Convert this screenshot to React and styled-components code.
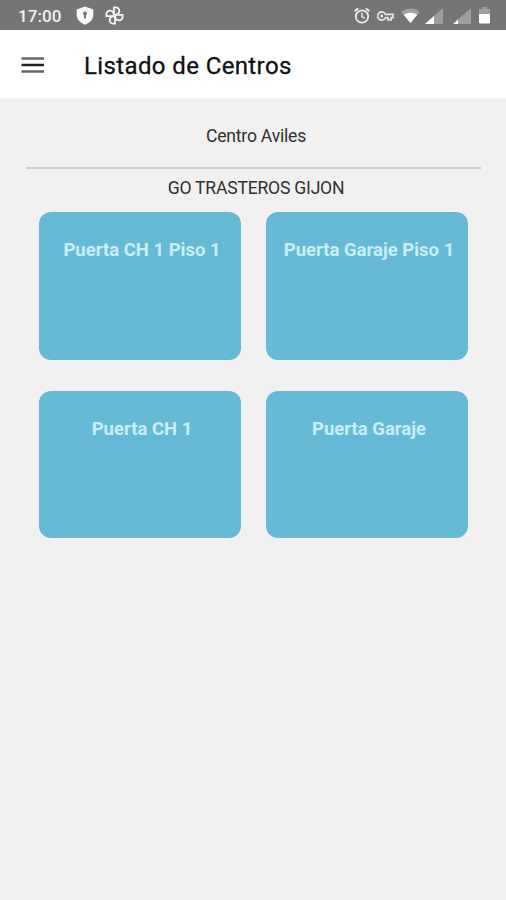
import styled, { createGlobalStyle } from "styled-components";

const GlobalStyle = createGlobalStyle`
  * {
    box-sizing: border-box;
  }

  body {
    margin: 0;
    background: #f1f1f1;
    font-family: Roboto, "Liberation Sans", sans-serif;
  }
`;

const Screen = styled.div`
  width: 506px;
  height: 900px;
  overflow: hidden;
  background: #f1f1f1;
`;

const StatusBar = styled.div`
  height: 30px;
  display: flex;
  align-items: center;
  padding: 1px 16px 0 18px;
  background: #757575;
  color: #f0f0f0;

  & svg {
    display: block;
    flex: none;
  }
`;

const Clock = styled.span`
  width: 58px;
  font-size: 17px;
  font-weight: 500;
  letter-spacing: 0.1px;
`;

const StatusGroup = styled.div`
  display: flex;
  align-items: center;
  gap: ${({ $gap }) => $gap}px;
`;

const StatusRight = styled(StatusGroup)`
  margin-left: auto;
`;

const SignalGroup = styled(StatusGroup)`
  margin: 0 1px 0 -2px;
`;

const Header = styled.header`
  height: 69px;
  display: flex;
  align-items: center;
  padding: 2px 21px 0;
  background: #ffffff;
  border-bottom: 1px solid #f7f7f7;
`;

const MenuButton = styled.button`
  width: 23px;
  margin-right: 40px;
  padding: 0;
  border: 0;
  background: none;
  cursor: pointer;

  & svg {
    display: block;
  }
`;

const Title = styled.h1`
  margin: 2px 0 0;
  font-size: 24px;
  font-weight: 400;
  line-height: 28px;
  letter-spacing: 0.38px;
  color: #111111;
  -webkit-text-stroke: 0.3px #111111;
`;

const Content = styled.main`
  padding: 0 25px 0 26px;
`;

const CenterName = styled.div`
  height: ${({ $height }) => $height}px;
  padding-top: ${({ $top }) => $top}px;
  padding-left: 5px;
  font-size: 17.6px;
  line-height: 24px;
  letter-spacing: -0.23px;
  text-align: center;
  color: #303030;
`;

const Divider = styled.hr`
  height: 2px;
  margin: 0;
  border: 0;
  background: #cfcfcf;
`;

const DoorGrid = styled.div`
  display: grid;
  grid-template-columns: 202px 202px;
  column-gap: 25px;
  row-gap: 31px;
  padding-left: 13px;
`;

const DoorCard = styled.button`
  height: 147.5px;
  display: flex;
  justify-content: center;
  align-items: flex-start;
  padding: 26px 0 0 4px;
  border: 0;
  border-radius: 12px;
  background: #66bad6;
  color: #c9eefa;
  font-family: inherit;
  font-size: 18.5px;
  font-weight: 700;
  line-height: 24px;
  white-space: nowrap;
  cursor: pointer;
`;

const ShieldIcon = () => (
  <svg width="18" height="19" viewBox="0 0 18 19">
    <path
      d="M9 .5 17.3 3.4V9c0 4.500-3.500 8-8.300 9.700C4.200 17 .7 13.500.7 9V3.400z"
      fill="#fafafa"
    />
    <circle cx="9" cy="7.500" r="2" fill="#757575" />
    <path d="M8.200 8h1.600l.3 4.500H7.900z" fill="#757575" />
  </svg>
);

const FanIcon = () => (
  <svg width="19" height="19" viewBox="0 0 18 18">
    <g fill="none" stroke="#f5f5f5" strokeWidth="1.700">
      {[0, 90, 180, 270].map((angle) => (
        <path
          key={angle}
          d="M8.500 8.500V1.300C12 .8 13.800 2.600 13.600 4.900 13.400 7.300 11.500 8.500 8.500 8.500z"
          transform={`rotate(${angle} 9 9)`}
        />
      ))}
    </g>
  </svg>
);

const AlarmIcon = () => (
  <svg width="16" height="17" viewBox="0 0 16 17">
    <g fill="none" stroke="#eeeeee" strokeWidth="1.800">
      <circle cx="8" cy="9.500" r="6.200" />
      <path d="M8 5.800V9.700l2.700 1.700" strokeWidth="1.400" />
      <path d="M.7 4.200 4.200 1.200M15.300 4.200 11.800 1.200" />
    </g>
  </svg>
);

const KeyIcon = () => (
  <svg width="17" height="10" viewBox="0 0 17 10">
    <path
      d="M8.500 3.400A4.100 4.100 0 1 0 8.500 6.600H11V9h3.200V6.600H16V3.400z"
      fill="none"
      stroke="#e8e8e8"
      strokeWidth="1.600"
    />
    <circle cx="4.800" cy="5" r="1.400" fill="#e8e8e8" />
  </svg>
);

const WifiIcon = () => (
  <svg width="19" height="15" viewBox="0 0 20 16">
    <path d="M0 4.200C6 -.6 14 -.6 20 4.200L10 16z" fill="#a2a2a2" />
    <path d="M2.800 7.300C7.300 4.200 12.700 4.200 17.200 7.300L10 16z" fill="#ffffff" />
  </svg>
);

const SignalIcon = ({ level }) => (
  <svg width="18" height="16" viewBox="0 0 18 16">
    <path d="M18 0v16H0z" fill="#9e9e9e" />
    <path d={`M0 16 ${level} ${16 - (level * 16) / 18}V16z`} fill="#ffffff" />
  </svg>
);

const BatteryIcon = () => (
  <svg width="11" height="17" viewBox="0 0 11 17">
    <path d="M3 0h5v2h3v5H0V2h3z" fill="#9e9e9e" />
    <path d="M0 7h11v8.500q0 1-1 1H1q-1 0-1-1z" fill="#ffffff" />
  </svg>
);

const MenuIcon = () => (
  <svg width="23" height="16" viewBox="0 0 23 16">
    <path d="M.5 1.500h22.500M.5 14.500h22.500" stroke="#666666" strokeWidth="2.500" />
    <path d="M.5 8h22.500" stroke="#222222" strokeWidth="2.500" />
  </svg>
);

const doors = [
  "Puerta CH 1 Piso 1",
  "Puerta Garaje Piso 1",
  "Puerta CH 1",
  "Puerta Garaje",
];

const App = () => {
  return (
    <Screen>
      <GlobalStyle />
      <StatusBar>
        <Clock>17:00</Clock>
        <StatusGroup $gap={11}>
          <ShieldIcon />
          <FanIcon />
        </StatusGroup>
        <StatusRight $gap={7}>
          <AlarmIcon />
          <KeyIcon />
          <WifiIcon />
          <SignalGroup $gap={10}>
            <SignalIcon level={9} />
            <SignalIcon level={5} />
          </SignalGroup>
          <BatteryIcon />
        </StatusRight>
      </StatusBar>
      <Header>
        <MenuButton aria-label="Menu">
          <MenuIcon />
        </MenuButton>
        <Title>Listado de Centros</Title>
      </Header>
      <Content>
        <CenterName $height={68} $top={25}>
          Centro Aviles
        </CenterName>
        <Divider />
        <CenterName $height={43} $top={7}>
          GO TRASTEROS GIJON
        </CenterName>
        <DoorGrid>
          {doors.map((door) => (
            <DoorCard key={door}>{door}</DoorCard>
          ))}
        </DoorGrid>
      </Content>
    </Screen>
  );
};

export default App;
